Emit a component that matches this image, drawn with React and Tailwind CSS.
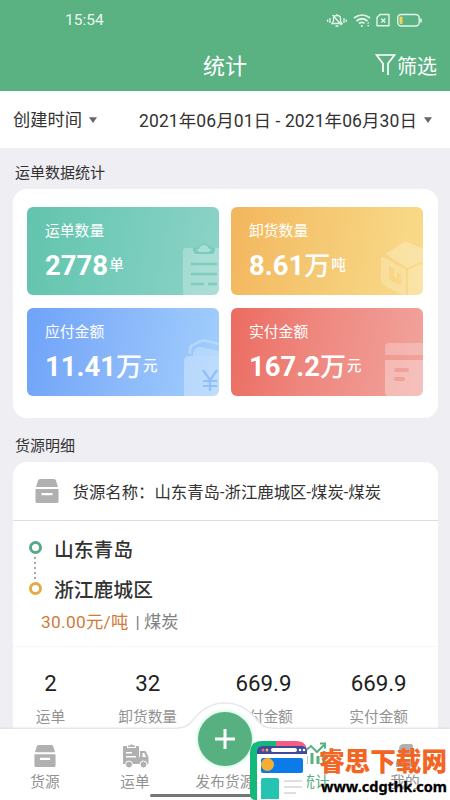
import React from "react";

const tiles = [
  {
    label: "运单数量",
    value: "2778",
    unit: "单",
    color: "bg-linear-[100deg,#63c3ac_0%,#6dc9b5_30%,#8dd3c7_100%]",
    icon: <ClipboardArt />,
  },
  {
    label: "卸货数量",
    value: "8.61",
    scale: "万",
    unit: "吨",
    color: "bg-linear-[100deg,#f3b65d_0%,#f5c670_40%,#f9dc8b_100%]",
    icon: <BoxArt />,
  },
  {
    label: "应付金额",
    value: "11.41",
    scale: "万",
    unit: "元",
    color: "bg-linear-[100deg,#6ea3f8_0%,#86b4fa_40%,#a2cffc_100%]",
    icon: <WalletArt />,
  },
  {
    label: "实付金额",
    value: "167.2",
    scale: "万",
    unit: "元",
    color: "bg-linear-[100deg,#ec6b60_0%,#ee867d_40%,#f1a49d_100%]",
    icon: <DrawerArt />,
  },
];

const totals = [
  { value: "2", label: "运单", width: "w-[76px]" },
  { value: "32", label: "卸货数量", width: "w-[119px]" },
  { value: "669.9", label: "应付金额", width: "w-[113px]" },
  { value: "669.9", label: "实付金额", width: "w-[118px]" },
];

function ClipboardArt() {
  return (
    <svg className="absolute right-0 bottom-0" width="38" height="52" viewBox="0 0 38 52">
      <path d="M2 52V8q0-3 3-3h33v47z" fill="#fff" opacity=".27" />
      <path d="M12 5h3q2-4 8-4t8 4h3v1q0 5-4 5H16q-4 0-4-5z" fill="#79cbbb" />
      <path d="M16 6h2q1-4 5-4t5 4h2q0 3-3 3h-8q-3 0-3-3z" fill="#a9ded5" />
      <path d="M10 21h26M10 31h26M10 41h13M27 41h9" stroke="#7fccbe" strokeWidth="2.6" />
    </svg>
  );
}

function BoxArt() {
  return (
    <svg className="absolute right-0 bottom-0" width="42" height="54" viewBox="0 0 42 54">
      <path d="M5 13 22 1.500q2-1.500 4-.5l16 7V20l-16 7z" fill="#fff" opacity=".26" />
      <path
        d="M0 18q0-3 3-2l22 13v25h-4L3 44q-3-2-3-5zM8 25v10q0 4 4 6l8 3V33l-4-2v6l-3-2v-7z"
        fill="#fff"
        opacity=".22"
        fillRule="evenodd"
      />
      <path d="M27 29l15-7v32H27z" fill="#fff" opacity=".24" />
    </svg>
  );
}

function WalletArt() {
  return (
    <svg className="absolute right-0 bottom-0" width="36" height="58" viewBox="0 0 36 58">
      <path d="M7 16V11q0-3 3-4l8-4q3-1 6 0l12 3" fill="none" stroke="#b6d8fd" strokeWidth="2.500" />
      <path d="M10 16l1-3q2-5 7-4l18 4v5H10z" fill="#fff" opacity=".26" />
      <path d="M1 58V23q0-5 5-5h30v40z" fill="#fff" opacity=".3" />
      <path d="m20 32 7 10 7-10M27 42v11M20 43h14M20 48h14" fill="none" stroke="#92bff9" strokeWidth="2.200" />
    </svg>
  );
}

function DrawerArt() {
  return (
    <svg className="absolute right-0 bottom-0" width="39" height="54" viewBox="0 0 39 54">
      <path d="M1 13V5q0-4 4-4h34v12z" fill="#fff" opacity=".25" />
      <path d="M1 18h38v36H4q-3 0-3-4z" fill="#fff" opacity=".32" />
      <path d="M12 28h11M12 37h7" stroke="#f0a19b" strokeWidth="4" strokeLinecap="round" />
    </svg>
  );
}

function CargoIcon({ size }) {
  return (
    <svg width={size} height={size} viewBox="0 0 24 24" fill="#b0b0b0">
      <path d="M5 0h14q1.500 0 2 1.500L23 8H1l2-6.500Q3.500 0 5 0z" />
      <path d="M.5 10h23v12.500q0 1.500-1.500 1.500H2Q.5 24 .5 22.500zM6.500 14v2.300h11V14z" fillRule="evenodd" />
    </svg>
  );
}

function TruckIcon() {
  return (
    <svg width="27" height="24" viewBox="0 0 27 24" fill="#b0b0b0">
      <path
        d="M2 2h3v2h9V2h2q1 0 1 1v17H1V3q0-1 1-1zM4 8v1.500h6V8zM4 12v1.500h10V12z"
        fillRule="evenodd"
      />
      <path d="M6 3V1.500h2L9.500 0 11 1.500h2V3z" />
      <path d="M18 7h4.500q1 0 1.600 1l2.400 5v7H17v-7h1zM20.500 9v4h3.700l-2-4z" fillRule="evenodd" />
      <circle cx="7" cy="20.500" r="3.500" stroke="#fff" />
      <circle cx="21.500" cy="20.500" r="3.500" stroke="#fff" />
    </svg>
  );
}

function StatusIcons() {
  return (
    <svg width="98" height="18" viewBox="0 0 98 18" fill="none" stroke="#e3f5ea" strokeWidth="1.300">
      {/* muted bell */}
      <path d="M6 12.500 7.500 10V7.500q0-3 3.500-3t3.500 3V10l1.500 2.500zM11 4.500V3M9.500 15h3M6.500 4l9 10M4 7v5M1.700 8.500v2.500M18 7v5M20.300 8.500v2.500" />
      {/* wifi */}
      <path d="M28 7q8-6 16 0M30.500 10q5.500-4.500 11 0M33 12.500q3-2.300 5.500-.2" strokeWidth="1.700" />
      <circle cx="35.800" cy="15" r="1" fill="#e3f5ea" stroke="none" />
      <path d="M41 12.500l1.200-1.800 1.200 1.800zM41 14l1.200 1.800L43.400 14z" fill="#e3f5ea" stroke="none" />
      {/* no sim */}
      <path d="M54 3.500h9v11.300H51V6.500z" strokeWidth="1.400" strokeLinejoin="round" />
      <path d="m55.300 7.500 4 4m0-4-4 4" strokeWidth="1.500" />
      {/* battery */}
      <rect x="71.700" y="3.500" width="21.500" height="11.500" rx="3.500" strokeWidth="1.400" />
      <path d="M95 7.500v4" strokeWidth="1.600" />
      <rect x="73.500" y="5.500" width="3" height="7.500" rx="1" fill="#f4d35e" stroke="none" />
    </svg>
  );
}

function Caret() {
  return (
    <svg className="-mt-[2px]" width="8" height="6" viewBox="0 0 8 6" fill="#666">
      <path d="M0 .3h8L4 6z" />
    </svg>
  );
}

function NavItem({ icon, label, active }) {
  return (
    <div className="flex w-[90px] flex-col items-center">
      <div className="flex h-[24px] items-center justify-center">{icon}</div>
      <span className={active ? "mt-[3px] text-[14.7px] leading-[22px] text-[#59b080]" : "mt-[3px] text-[14.7px] leading-[22px] text-[#929292]"}>
        {label}
      </span>
    </div>
  );
}

function SiteLogo() {
  return (
    <svg className="shrink-0" width="58" height="59" viewBox="0 0 58 59">
      <path d="M0 53V12Q0 0 12 0h15v59H6q-6 0-6-6z" fill="#13b87a" />
      <path d="M26 0h20q11 0 11 11v8H26z" fill="#f75c83" />
      <path d="M7 59V10q0-5 5-5h40q5 0 5 5v49z" fill="#fff" />
      <path d="M7 13v-3q0-5 5-5h40q5 0 5 5v3z" fill="#3e4a9c" />
      <circle cx="13" cy="9" r="1.500" fill="#f75c83" />
      <circle cx="17" cy="9" r="1.500" fill="#f4b13e" />
      <rect x="21" y="7" width="26" height="4" rx="2" fill="#fff" />
      <circle cx="50" cy="9" r="1.300" fill="#fff" />
      <circle cx="54" cy="9" r="1.300" fill="#fff" />
      <rect x="11" y="17" width="42" height="15" rx="2" fill="#0b7bea" />
      <circle cx="17.500" cy="23.500" r="6.500" fill="#f6ae32" />
      <path d="M11 58V39q0-2 2-2h14q2 0 2 2v19z" fill="#25c4b2" />
      <path d="M34 40h18M34 46h18M34 52h12" stroke="#d5d5d8" strokeWidth="1.600" />
    </svg>
  );
}

export default function App() {
  return (
    <div className="relative flex h-[800px] w-[450px] flex-col overflow-hidden bg-[#efeef3] font-['Roboto','Noto_Sans_CJK_SC',sans-serif] whitespace-nowrap text-[#333]">
      {/* Header */}
      <header className="h-[91px] shrink-0 bg-[#5ab182] text-white">
        <div className="flex h-[40px] items-start justify-between pr-[26px] pl-[65px]">
          <span className="text-[15.500px] leading-[41px] text-[#ecf8f0]">15:54</span>
          <div className="mt-[11px]">
            <StatusIcons />
          </div>
        </div>
        <div className="grid h-[51px] grid-cols-3 items-center pr-[13px]">
          <span />
          <h1 className="pt-[2px] pl-[13px] text-center text-[22px] leading-[50px]">统计</h1>
          <div className="flex items-center justify-end">
            <svg className="mt-[-4px] mr-[1px]" width="21" height="22" viewBox="0 0 21 22" fill="none" stroke="#fff" strokeWidth="1.700">
              <path d="M8 19v-8.500L1.500 2h18L13 10.500V22" />
            </svg>
            <span className="pt-[1px] text-[20px] leading-[50px]">筛选</span>
          </div>
        </div>
      </header>

      {/* Filters */}
      <div className="flex h-[57px] shrink-0 items-center justify-between bg-white pt-[3px] pr-[18px] pl-[13px]">
        <div className="flex items-center gap-[7px]">
          <span className="text-[17.300px]">创建时间</span>
          <Caret />
        </div>
        <div className="flex items-center gap-[7px]">
          <span className="text-[17.500px] tracking-[0.080px]">2021年06月01日 - 2021年06月30日</span>
          <Caret />
        </div>
      </div>

      {/* Content */}
      <main className="min-h-0 flex-1 overflow-hidden px-[12.500px]">
        <h2 className="h-[41px] pt-[3px] pl-[2.500px] text-[15px] leading-[45px]">运单数据统计</h2>
        <div className="grid h-[229px] grid-cols-2 content-start gap-x-[12px] gap-y-[12.500px] rounded-[14px] bg-white px-[14.500px] pt-[17.500px]">
          {tiles.map((tile) => (
            <div key={tile.label} className={`relative h-[88.500px] overflow-hidden rounded-[6px] pl-[18px] text-white ${tile.color}`}>
              {tile.icon}
              <div className="pt-[13px] text-[14.800px] leading-[22px]">{tile.label}</div>
              <div className="mt-[4px] flex items-center">
                <span className="text-[27.500px] leading-[40px] font-bold">{tile.value}</span>
                {tile.scale && <span className="text-[26px] leading-[40px] font-medium">{tile.scale}</span>}
                <span className="ml-[1px] text-[14.500px] leading-[40px] font-medium">{tile.unit}</span>
              </div>
            </div>
          ))}
        </div>

        <h2 className="h-[44px] pt-[6px] pl-[2.500px] text-[15px] leading-[45px]">货源明细</h2>
        <div className="h-[300px] rounded-t-[14px] bg-white">
          <div className="flex h-[59px] items-center border-b border-[#dedede] pl-[22px]">
            <CargoIcon size={24} />
            <span className="ml-[14px] pt-[4px] text-[16.400px]">货源名称：山东青岛-浙江鹿城区-煤炭-煤炭</span>
          </div>
          <div className="flex h-[126px] border-b border-[#f6f6f6] pl-[15.500px]">
            <div className="flex w-[14px] flex-col items-center pt-[20px]">
              <span className="size-[13px] rounded-full border-3 border-[#56a887]" />
              <div className="flex h-[28px] flex-col items-center justify-center gap-[3px]">
                {[1, 2, 3, 4, 5].map((dot) => (
                  <span key={dot} className="size-[2px] rounded-full bg-[#888]" />
                ))}
              </div>
              <span className="size-[13px] rounded-full border-3 border-[#e3ab45]" />
            </div>
            <div className="pt-[10px] pl-[12px]">
              <div className="text-[19.800px] leading-[40px] font-medium">山东青岛</div>
              <div className="text-[19.800px] leading-[40px] font-medium">浙江鹿城区</div>
              <div className="-mt-[1px] -ml-[13px] text-[17.300px] leading-[24px] text-[#808080]">
                <span className="tracking-[0.300px] text-[#cf7b3a]">30.00元/吨</span>
                <span className="ml-[7px]">| 煤炭</span>
              </div>
            </div>
          </div>
          <div className="flex pt-[21px]">
            {totals.map((item) => (
              <div key={item.label} className={`text-center ${item.width}`}>
                <div className="text-[22.300px] leading-[30px] text-[#222]">{item.value}</div>
                <div className="mt-[8px] text-[14.700px] leading-[22px] text-[#929292]">{item.label}</div>
              </div>
            ))}
          </div>
        </div>
      </main>

      {/* Bottom navigation */}
      <nav className="relative flex h-[71px] shrink-0 bg-white pt-[15px] shadow-[0_-1px_2px_#dcdcdf]">
        <svg className="absolute -top-[29px] left-[178px]" width="94" height="42" viewBox="0 0 94 42">
          <path d="M0 28q9 0 15-8Q28 3 47 3t32 17q6 8 15 8v14H0z" fill="#fff" />
          <path d="M0 28q9 0 15-8Q28 3 47 3t32 17q6 8 15 8" fill="none" stroke="#e8e8ea" strokeWidth="1.500" />
        </svg>
        <div className="absolute -top-[17px] left-[198px] flex size-[54px] items-center justify-center rounded-full bg-[#56b080] shadow-[0_0_4px_#a5f0c9]">
          <svg width="20" height="20" viewBox="0 0 20 20" stroke="#fff" strokeWidth="3">
            <path d="M10 0v20M0 10h20" />
          </svg>
        </div>
        <NavItem icon={<CargoIcon size={22} />} label="货源" />
        <NavItem icon={<TruckIcon />} label="运单" />
        <NavItem label="发布货源" />
        <NavItem
          active
          label="统计"
          icon={
            <svg className="-mt-[6px]" width="24" height="22" viewBox="0 0 24 22" fill="none" stroke="#59b080" strokeWidth="3">
              <path d="M3 22v-8M9 22V11M15 22v-8M21 22V9" />
              <path d="m1 10 7-6 6 6 7-7M17 1.500h5v5" strokeWidth="2" />
            </svg>
          }
        />
        <NavItem
          label="我的"
          icon={
            <svg className="-mt-[2px]" width="22" height="24" viewBox="0 0 22 24" fill="#b0b0b0">
              <path d="M10 1h7q2 0 2 2v8q0 3-3 3H5V6q0-5 5-5zM2 24v-4q0-4 5-4h9q3 0 3 4v4z" />
            </svg>
          }
        />
        <div className="absolute bottom-[3px] left-[150px] h-[3px] w-[150px] rounded-full bg-[#757575]" />
      </nav>

      {/* Site badge floating over the navigation */}
      <div className="absolute right-0 bottom-0 flex h-[59px] w-[200px] items-start">
        <SiteLogo />
        <div className="ml-[11px]">
          <div className="pt-[6px] text-[25.600px] leading-[30px] font-black text-[#f26522]">睿思下载网</div>
          <div className="pl-[2px] font-['Noto_Sans',sans-serif] text-[14.500px] leading-[18px] font-bold text-black [-webkit-text-stroke:0.3px_black]">www.cdgthk.com</div>
        </div>
      </div>
    </div>
  );
}
